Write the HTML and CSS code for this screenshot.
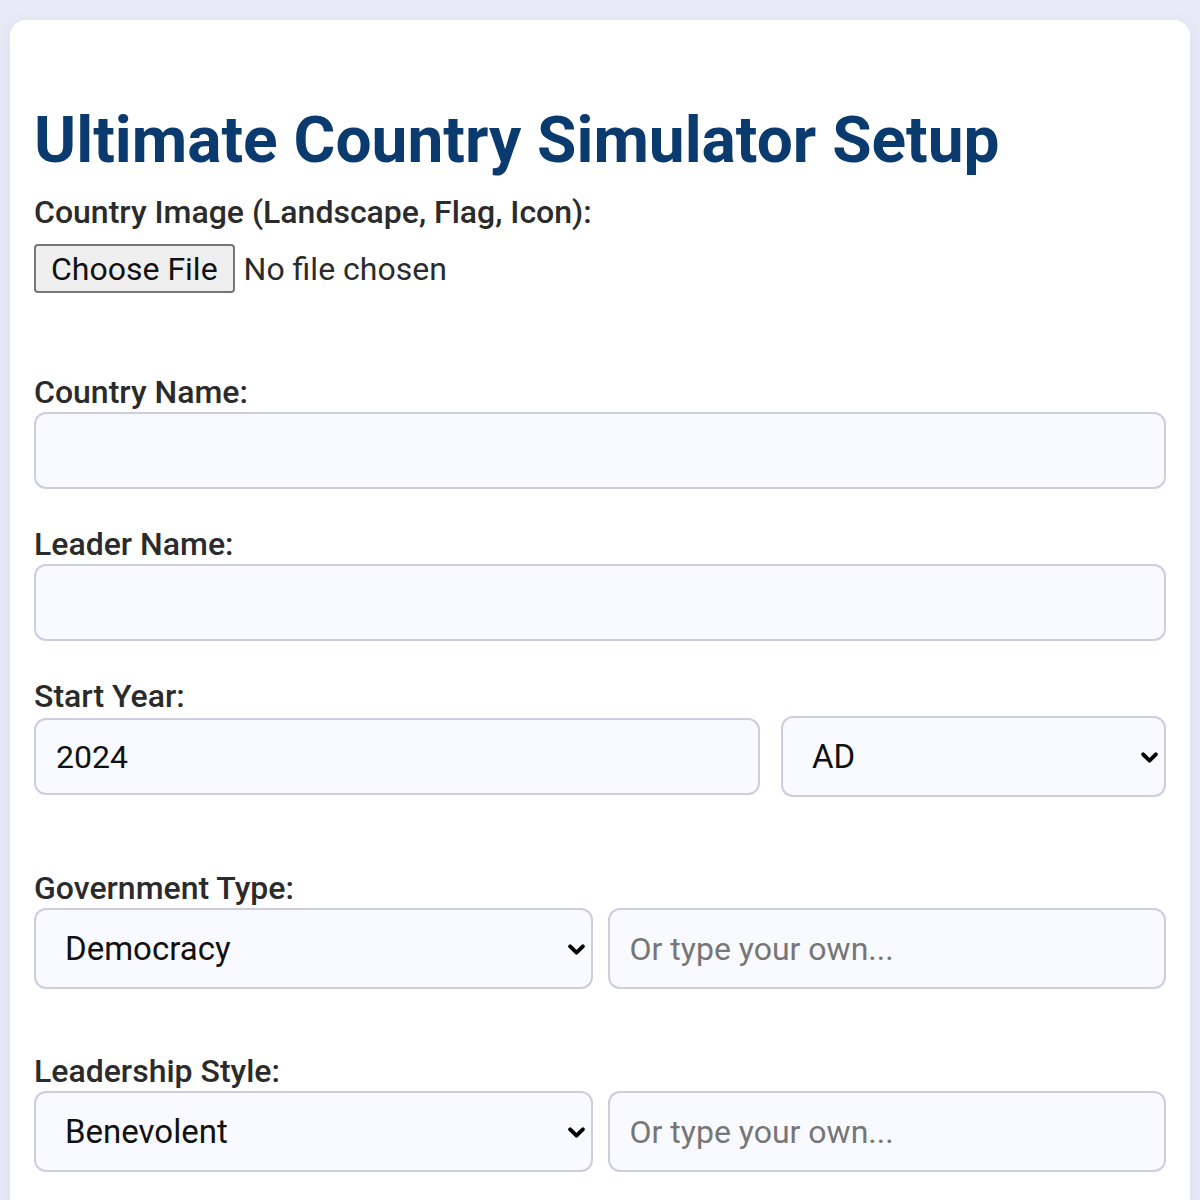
FILE: index.html
```html
<!DOCTYPE html>
<html lang="en">
<head>
  <meta charset="UTF-8" />
  <meta name="viewport" content="width=device-width, initial-scale=1.0" />
  <title>Ultimate Country Simulator</title>
  <link rel="stylesheet" href="styles.css">
</head>
<body>

  <div class="setup-card">
    <h1 class="setup-title">Ultimate Country Simulator Setup</h1>

    <div class="field field-file">
      <label for="countryImage">Country Image (Landscape, Flag, Icon):</label>
      <input type="file" id="countryImage" accept="image/*" class="file-input" />
    </div>

    <div class="field">
      <label for="countryName">Country Name:</label>
      <input type="text" id="countryName" class="text-input" />
    </div>

    <div class="field">
      <label for="leaderName">Leader Name:</label>
      <input type="text" id="leaderName" class="text-input" />
    </div>

    <div class="field field-year">
      <label for="startYear">Start Year:</label>
      <div class="year-row">
        <input type="number" id="startYear" class="text-input" value="2024" />
        <div class="select-wrap">
          <select id="era" class="select-input">
            <option>AD</option>
            <option>BC</option>
          </select>
          <svg class="chevron" viewBox="0 0 16 10"><path d="M2 2l6 6 6-6" /></svg>
        </div>
      </div>
    </div>

    <div class="field field-combo">
      <label for="govType">Government Type:</label>
      <div class="combo-row">
        <div class="select-wrap">
          <select id="govType" class="select-input">
            <option>Democracy</option>
            <option>Monarchy</option>
            <option>Republic</option>
            <option>Dictatorship</option>
            <option>Theocracy</option>
          </select>
          <svg class="chevron" viewBox="0 0 16 10"><path d="M2 2l6 6 6-6" /></svg>
        </div>
        <input type="text" id="govCustom" class="text-input" placeholder="Or type your own..." />
      </div>
    </div>

    <div class="field field-combo">
      <label for="leaderStyle">Leadership Style:</label>
      <div class="combo-row">
        <div class="select-wrap">
          <select id="leaderStyle" class="select-input">
            <option>Benevolent</option>
            <option>Authoritarian</option>
            <option>Charismatic</option>
            <option>Pragmatic</option>
          </select>
          <svg class="chevron" viewBox="0 0 16 10"><path d="M2 2l6 6 6-6" /></svg>
        </div>
        <input type="text" id="styleCustom" class="text-input" placeholder="Or type your own..." />
      </div>
    </div>
  </div>

</body>
</html>
```

FILE: styles.css
```css
* {
  box-sizing: border-box;
}

body {
  margin: 0;
  padding: 20px 10px;
  background: #e8eaf6;
  font-family: Roboto, "Noto Sans", sans-serif;
  color: #2b2b2b;
}

.setup-card {
  background: #fff;
  border-radius: 16px;
  box-shadow: 0 4px 16px rgba(60, 60, 120, 0.08);
  padding: 24px 24px 40px;
}

.setup-title {
  margin: 59px 0 15px;
  font-size: 64px;
  font-weight: 700;
  color: #0b3a6e;
  line-height: 75px;
}

.field {
  margin-bottom: 36px;
}

.field label {
  display: block;
  font-size: 32px;
  font-weight: 500;
  line-height: 38px;
  margin-bottom: 1px;
}

.field-file {
  margin-bottom: 80px;
}

.field-file label {
  margin-bottom: 13px;
}

.file-input {
  display: block;
  font-family: Roboto, sans-serif;
  font-size: 32px;
  color: #2b2b2b;
}

.file-input::file-selector-button {
  font: inherit;
  color: #111;
  height: 49px;
  padding: 0 15px;
  margin-right: 9px;
  border: 2px solid #767676;
  border-radius: 4px;
  background: #efefef;
}

.text-input,
.select-input {
  display: block;
  width: 100%;
  font-family: Roboto, sans-serif;
  font-size: 32px;
  color: #111;
  background: #f8faff;
  border: 2px solid #cdcde0;
  border-radius: 12px;
  outline: none;
}

.text-input {
  height: 77px;
  padding: 0 20px;
}

.text-input::placeholder {
  color: #767676;
}

.select-input {
  appearance: none;
  -webkit-appearance: none;
  height: 81px;
  padding: 0 40px 0 29px;
  font-size: 33px;
}

.select-wrap {
  position: relative;
}

.chevron {
  position: absolute;
  right: 8px;
  top: 50%;
  width: 17px;
  height: 11px;
  margin-top: -5px;
  pointer-events: none;
}

.chevron path {
  fill: none;
  stroke: #000;
  stroke-width: 3.6;
  stroke-linecap: round;
  stroke-linejoin: round;
}

.year-row {
  display: grid;
  grid-template-columns: 1fr 385px;
  gap: 21px;
  align-items: center;
}

.field-year {
  margin-bottom: 72px;
}

.combo-row {
  display: grid;
  grid-template-columns: 1fr 1fr;
  gap: 15px;
}

.combo-row .text-input {
  height: 81px;
}

.field-combo {
  margin-bottom: 63px;
}

/* hide the number spinner */
input[type="number"]::-webkit-inner-spin-button,
input[type="number"]::-webkit-outer-spin-button {
  -webkit-appearance: none;
  margin: 0;
}
```
